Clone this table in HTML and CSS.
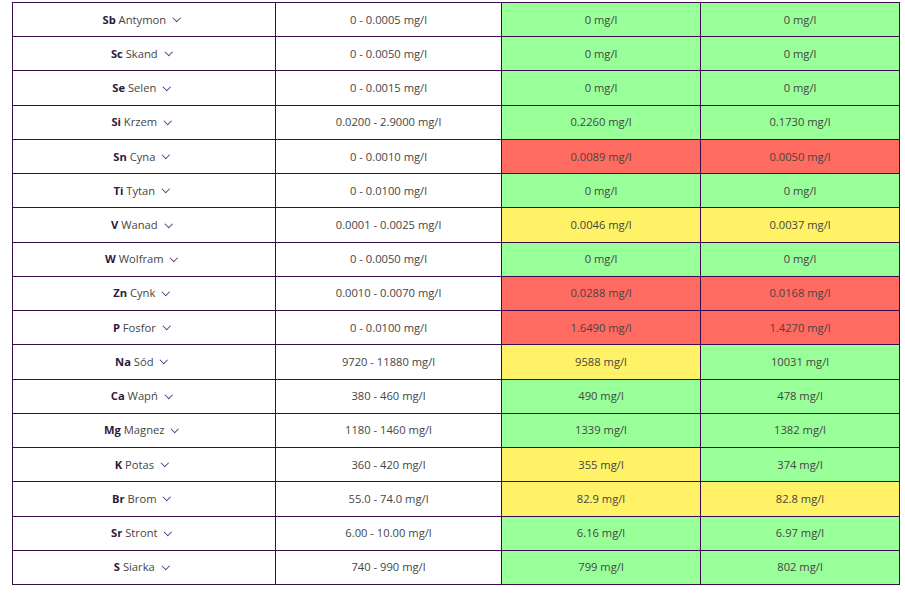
FILE: index.html
```html
<!DOCTYPE html>
<html lang="pl">
<head>
<meta charset="utf-8">
<link rel="stylesheet" href="styles.css">
</head>
<body>
<table class="results">
  <colgroup>
    <col class="c-name"><col class="c-range"><col class="c-val"><col class="c-val">
  </colgroup>
  <tbody>
    <tr><td class="name"><b>Sb</b> Antymon <span class="chev"></span></td><td>0 - 0.0005 mg/l</td><td class="ok">0 mg/l</td><td class="ok">0 mg/l</td></tr>
    <tr><td class="name"><b>Sc</b> Skand <span class="chev"></span></td><td>0 - 0.0050 mg/l</td><td class="ok">0 mg/l</td><td class="ok">0 mg/l</td></tr>
    <tr><td class="name"><b>Se</b> Selen <span class="chev"></span></td><td>0 - 0.0015 mg/l</td><td class="ok">0 mg/l</td><td class="ok">0 mg/l</td></tr>
    <tr><td class="name"><b>Si</b> Krzem <span class="chev"></span></td><td>0.0200 - 2.9000 mg/l</td><td class="ok">0.2260 mg/l</td><td class="ok">0.1730 mg/l</td></tr>
    <tr><td class="name"><b>Sn</b> Cyna <span class="chev"></span></td><td>0 - 0.0010 mg/l</td><td class="bad">0.0089 mg/l</td><td class="bad">0.0050 mg/l</td></tr>
    <tr><td class="name"><b>Ti</b> Tytan <span class="chev"></span></td><td>0 - 0.0100 mg/l</td><td class="ok">0 mg/l</td><td class="ok">0 mg/l</td></tr>
    <tr><td class="name"><b>V</b> Wanad <span class="chev"></span></td><td>0.0001 - 0.0025 mg/l</td><td class="warn">0.0046 mg/l</td><td class="warn">0.0037 mg/l</td></tr>
    <tr><td class="name"><b>W</b> Wolfram <span class="chev"></span></td><td>0 - 0.0050 mg/l</td><td class="ok">0 mg/l</td><td class="ok">0 mg/l</td></tr>
    <tr><td class="name"><b>Zn</b> Cynk <span class="chev"></span></td><td>0.0010 - 0.0070 mg/l</td><td class="bad">0.0288 mg/l</td><td class="bad">0.0168 mg/l</td></tr>
    <tr><td class="name"><b>P</b> Fosfor <span class="chev"></span></td><td>0 - 0.0100 mg/l</td><td class="bad">1.6490 mg/l</td><td class="bad">1.4270 mg/l</td></tr>
    <tr><td class="name"><b>Na</b> Sód <span class="chev"></span></td><td>9720 - 11880 mg/l</td><td class="warn">9588 mg/l</td><td class="ok">10031 mg/l</td></tr>
    <tr><td class="name"><b>Ca</b> Wapń <span class="chev"></span></td><td>380 - 460 mg/l</td><td class="ok">490 mg/l</td><td class="ok">478 mg/l</td></tr>
    <tr><td class="name"><b>Mg</b> Magnez <span class="chev"></span></td><td>1180 - 1460 mg/l</td><td class="ok">1339 mg/l</td><td class="ok">1382 mg/l</td></tr>
    <tr><td class="name"><b>K</b> Potas <span class="chev"></span></td><td>360 - 420 mg/l</td><td class="warn">355 mg/l</td><td class="ok">374 mg/l</td></tr>
    <tr><td class="name"><b>Br</b> Brom <span class="chev"></span></td><td>55.0 - 74.0 mg/l</td><td class="warn">82.9 mg/l</td><td class="warn">82.8 mg/l</td></tr>
    <tr><td class="name"><b>Sr</b> Stront <span class="chev"></span></td><td>6.00 - 10.00 mg/l</td><td class="ok">6.16 mg/l</td><td class="ok">6.97 mg/l</td></tr>
    <tr><td class="name"><b>S</b> Siarka <span class="chev"></span></td><td>740 - 990 mg/l</td><td class="ok">799 mg/l</td><td class="ok">802 mg/l</td></tr>
  </tbody>
</table>
</body>
</html>
```
FILE: styles.css
```css
html, body {
  margin: 0;
  padding: 0;
  background: #ffffff;
}
body {
  font-family: "Open Sans", "Noto Sans", sans-serif;
  font-size: 11.2px;
  color: #454545;
}
.results {
  border-collapse: collapse;
  table-layout: fixed;
  width: 888px;
  margin: 2px 0 0 12px;
}
.c-name { width: 263px; }
.c-range { width: 226px; }
.c-val { width: 199px; }
.results tr { height: 34.24px; }
.results td {
  border: 1px solid #3a0a4a;
  padding: 0 4px;
  text-align: center;
  vertical-align: middle;
  line-height: 16px;
}
.results td.name { padding-right: 10px; }
.name b {
  font-weight: 700;
  color: #2e1a3a;
}
.chev {
  display: inline-block;
  width: 4.5px;
  height: 4.5px;
  border-right: 1.2px solid #5a2a7a;
  border-bottom: 1.2px solid #5a2a7a;
  transform: rotate(45deg);
  margin-left: 5px;
  position: relative;
  top: -3px;
}
.ok { background: #99ff99; }
.bad { background: #ff6b60; }
.warn { background: #fff266; }
```
